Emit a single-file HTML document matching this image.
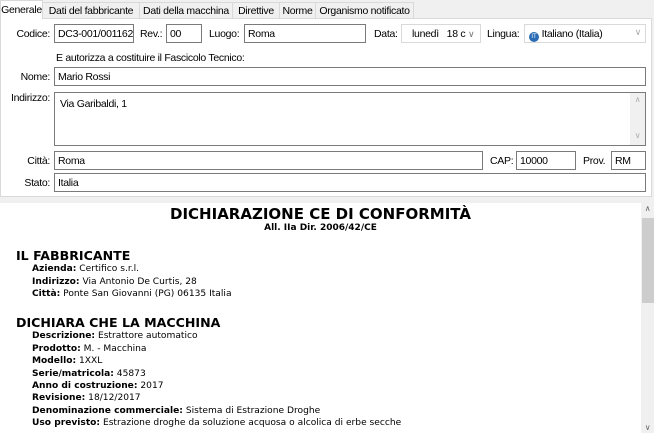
<!DOCTYPE html>
<html><head><meta charset="utf-8">
<style>
*{box-sizing:border-box;margin:0;padding:0}
body{width:654px;height:433px;overflow:hidden;background:#f0f0f0;font-family:"Liberation Sans",sans-serif;font-size:10.5px;letter-spacing:-0.3px;color:#000;position:relative}
.a{position:absolute;white-space:nowrap}
.tab{position:absolute;top:2px;height:16px;border:1px solid #d9d9d9;border-bottom:none;background:#f0f0f0;padding:2px 0 0;text-align:center;white-space:nowrap;overflow:hidden}
.tab.sel{top:0;height:19px;background:#fff;z-index:2;padding-top:3px}
.panel{position:absolute;left:0;top:18px;width:652px;height:179px;background:#fff;border:1px solid #d9d9d9}
.in{position:absolute;border:1px solid #7a7a7a;background:#fff;height:19px;padding:3px 0 0 3px;white-space:nowrap;overflow:hidden}
.lbl{position:absolute;text-align:right;white-space:nowrap}
.doc{position:absolute;left:0;top:203px;width:641px;height:230px;background:#fff;font-family:"DejaVu Sans",Verdana,sans-serif;letter-spacing:0}
.l{position:absolute;left:32px;white-space:nowrap;font-size:9.1px}
.h{position:absolute;left:16px;font-weight:bold;font-size:12.6px;white-space:nowrap}
</style></head><body>
<div class="panel"></div>
<div class="tab sel" style="left:0;width:43px">Generale</div>
<div class="tab" style="left:42px;width:98px">Dati del fabbricante</div>
<div class="tab" style="left:139px;width:94px">Dati della macchina</div>
<div class="tab" style="left:232px;width:48px">Direttive</div>
<div class="tab" style="left:279px;width:37px">Norme</div>
<div class="tab" style="left:315px;width:99px">Organismo notificato</div>

<div class="lbl" style="left:0;width:50px;top:28px">Codice:</div>
<div class="in" style="left:54px;top:24px;width:80px">DC3-001/001162</div>
<div class="lbl" style="left:140px;top:28px">Rev.:</div>
<div class="in" style="left:166px;top:24px;width:36px">00</div>
<div class="lbl" style="left:209px;top:28px">Luogo:</div>
<div class="in" style="left:244px;top:24px;width:122px">Roma</div>
<div class="lbl" style="left:374px;top:28px">Data:</div>
<div class="in" style="left:401px;top:24px;width:80px;border-color:#d9d9d9;padding-left:10px">lunedì&nbsp;&nbsp;&nbsp;18 c <span style="color:#777;font-size:9px">&#8744;</span></div>
<div class="lbl" style="left:487px;top:28px">Lingua:</div>
<div class="in" style="left:524px;top:24px;width:122px;border-color:#d9d9d9;padding-left:4px"><span style="display:inline-block;width:10px;height:10px;border-radius:50%;background:#2a6db5;color:#fff;font-size:6px;text-align:center;line-height:10px;vertical-align:-1px;letter-spacing:0">IT</span> Italiano (Italia)<span style="position:absolute;right:4px;top:2px;color:#aaa;font-size:9px">&#8744;</span></div>
<div class="a" style="left:56px;top:52px">E autorizza a costituire il Fascicolo Tecnico:</div>
<div class="lbl" style="left:0;width:50px;top:71px">Nome:</div>
<div class="in" style="left:54px;top:67px;width:592px">Mario Rossi</div>
<div class="lbl" style="left:0;width:50px;top:92px">Indirizzo:</div>
<div class="in" style="left:54px;top:92px;width:592px;height:54px;padding:5px 0 0 5px">Via Garibaldi, 1
<div style="position:absolute;right:0;top:0;width:15px;height:52px;background:#f0f0f0;color:#aaa;font-size:8px;text-align:center"><div style="margin-top:2px">&#8743;</div><div style="margin-top:27px">&#8744;</div></div></div>
<div class="lbl" style="left:0;width:50px;top:155px">Città:</div>
<div class="in" style="left:54px;top:151px;width:429px">Roma</div>
<div class="lbl" style="left:490px;top:155px">CAP:</div>
<div class="in" style="left:516px;top:151px;width:60px">10000</div>
<div class="lbl" style="left:583px;top:155px">Prov.</div>
<div class="in" style="left:611px;top:151px;width:35px">RM</div>
<div class="lbl" style="left:0;width:50px;top:177px">Stato:</div>
<div class="in" style="left:54px;top:173px;width:592px">Italia</div>

<div class="doc">
<div class="a" style="left:0;width:641px;text-align:center;top:2px;font-weight:bold;font-size:15px">DICHIARAZIONE CE DI CONFORMITÀ</div>
<div class="a" style="left:0;width:641px;text-align:center;top:20px;font-weight:bold;font-size:9px">All. IIa Dir. 2006/42/CE</div>
<div class="h" style="top:45px">IL FABBRICANTE</div>
<div class="l" style="top:61px"><b>Azienda:</b> Certifico s.r.l.</div>
<div class="l" style="top:74px"><b>Indirizzo:</b> Via Antonio De Curtis, 28</div>
<div class="l" style="top:86px"><b>Città:</b> Ponte San Giovanni (PG) 06135 Italia</div>
<div class="h" style="top:112px">DICHIARA CHE LA MACCHINA</div>
<div class="l" style="top:128px"><b>Descrizione:</b> Estrattore automatico</div>
<div class="l" style="top:141px"><b>Prodotto:</b> M. - Macchina</div>
<div class="l" style="top:153px"><b>Modello:</b> 1XXL</div>
<div class="l" style="top:166px"><b>Serie/matricola:</b> 45873</div>
<div class="l" style="top:178px"><b>Anno di costruzione:</b> 2017</div>
<div class="l" style="top:190px"><b>Revisione:</b> 18/12/2017</div>
<div class="l" style="top:203px"><b>Denominazione commerciale:</b> Sistema di Estrazione Droghe</div>
<div class="l" style="top:215px"><b>Uso previsto:</b> Estrazione droghe da soluzione acquosa o alcolica di erbe secche</div>
</div>
<div style="position:absolute;left:641px;top:203px;width:13px;height:230px;background:#f0f0f0">
<div style="position:absolute;top:1px;width:13px;text-align:center;color:#666;font-size:8px">&#8743;</div>
<div style="position:absolute;top:15px;left:1px;width:12px;height:85px;background:#cdcdcd"></div>
<div style="position:absolute;bottom:1px;width:13px;text-align:center;color:#666;font-size:8px">&#8744;</div>
</div>
</body></html>
